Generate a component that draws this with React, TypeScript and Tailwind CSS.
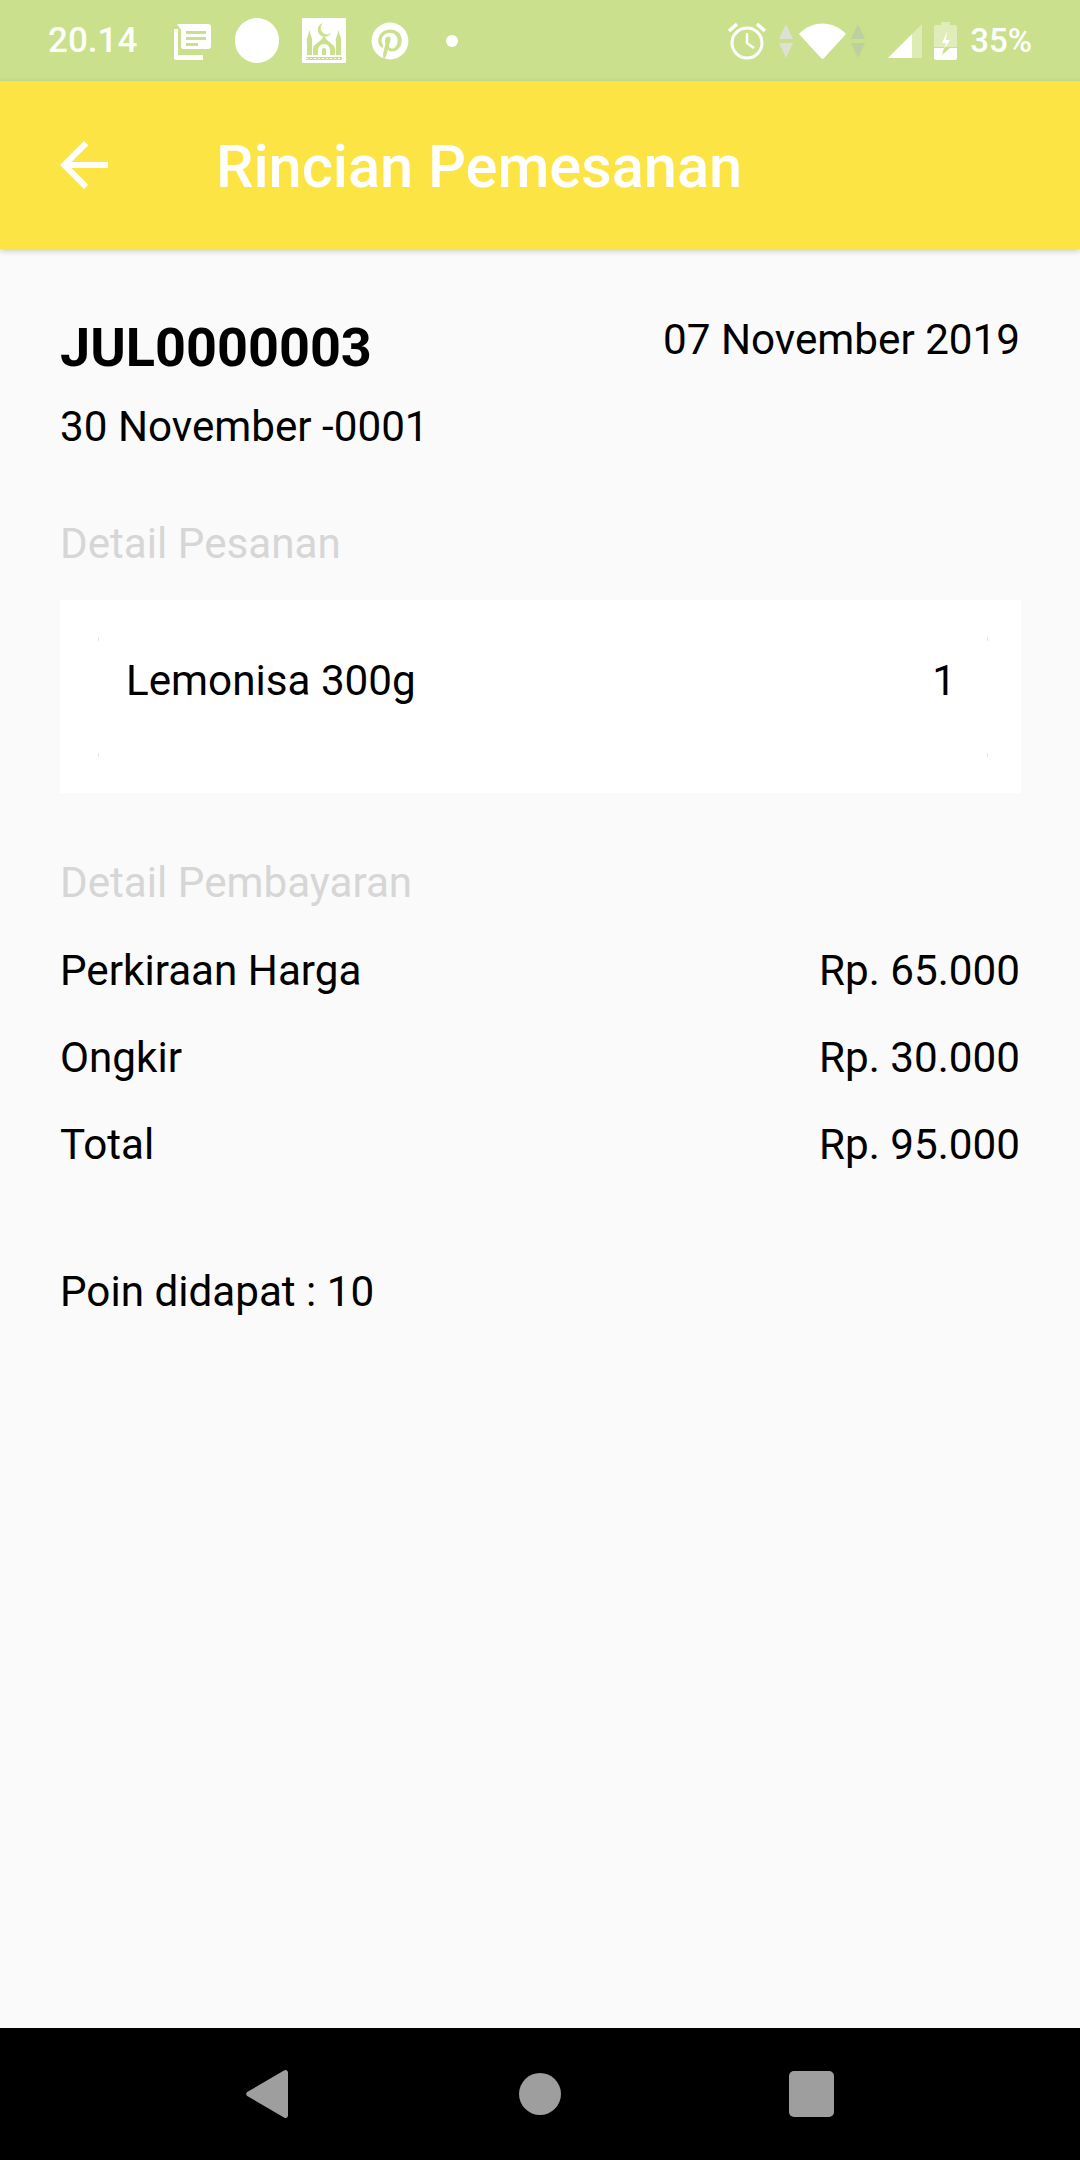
import React from 'react';
import { FaPinterest } from 'react-icons/fa';

const NewsIcon = () => (
  <svg width="38" height="38" viewBox="0 0 38 38" className="ml-[37px] shrink-0">
    <path fill="#fff" d="M3 2 H34 a3 3 0 0 1 3 3 V24 a3 3 0 0 1 -3 3 H9 a2 2 0 0 1 -2 -2 V8 Z" />
    <path fill="#fff" d="M0 7 H4 V33 H29 V38 H2 a2 2 0 0 1 -2 -2 Z" />
    <rect x="12" y="9" width="20" height="3" fill="#cbe08c" />
    <rect x="12" y="15" width="20" height="3" fill="#cbe08c" />
    <rect x="12" y="21" width="12" height="3" fill="#cbe08c" />
  </svg>
);

const MosqueIcon = () => (
  <svg width="44" height="45" viewBox="0 0 44 45" className="ml-[23px] shrink-0">
    <rect width="44" height="45" rx="1" fill="#fff" />
    <path fill="#cbe08c" d="M11 37 V31 C11 26 18 25 22 18 C26 25 33 26 33 31 V37 Z" />
    <path fill="#cbe08c" d="M5 37 V24 C4 21 6 19 7.5 12 C9 19 11 21 10 24 V37 Z M34 37 V24 C33 21 35 19 36.5 12 C38 19 40 21 39 24 V37 Z" />
    <path fill="#fff" d="M16 37 V32 a6 6 0 0 1 12 0 V37 Z" />
    <path fill="#cbe08c" d="M20 37 V32 a2 2 0 0 1 4 0 V37 Z" />
    <path fill="#cbe08c" d="M21 5 a7 7 0 1 0 8 10 a6 6 0 1 1 -8 -10 Z" />
    <rect x="4" y="39" width="36" height="3" fill="#cbe08c" />
    <path stroke="#fff" strokeWidth="1" strokeDasharray="2 2" d="M4 40.5 H40" />
  </svg>
);

const AlarmIcon = () => (
  <svg width="38" height="38" viewBox="0 0 38 38" fill="none" stroke="#fff" strokeWidth="3" className="shrink-0">
    <circle cx="19" cy="21" r="15" />
    <path d="M19 11 V21 L26 26" strokeWidth="2.5" />
    <path d="M1 9 L9 2 M37 9 L29 2" strokeWidth="3.5" />
  </svg>
);

const DataArrows = ({ className, color }: { className: string; color: string }) => (
  <svg width="14" height="34" viewBox="0 0 14 34" className={className}>
    <path fill={color} d="M7 0 L14 15 H0 Z" />
    <path fill={color} d="M0 19 H14 L7 34 Z" />
  </svg>
);

const WifiIcon = () => (
  <svg width="47" height="36" viewBox="0 0 47 36" className="ml-[6px] shrink-0">
    <path fill="#fff" d="M0 11 C13 -3 34 -3 47 11 L25 35 a2 2 0 0 1 -3 0 Z" />
  </svg>
);

const SignalIcon = () => (
  <svg width="34" height="34" viewBox="0 0 34 34" className="ml-[23px] shrink-0">
    <path fill="#fff" fillOpacity="0.35" d="M34 0 V34 H0 Z" />
    <path fill="#fff" d="M24 10 V34 H0 Z" />
  </svg>
);

const BatteryIcon = () => (
  <svg width="23" height="38" viewBox="0 0 23 38" className="ml-3 shrink-0">
    <path fill="#fff" fillOpacity="0.4" d="M7 0 H16 V3 H21 a2 2 0 0 1 2 2 V25 H0 V5 a2 2 0 0 1 2 -2 H7 Z" />
    <path fill="#fff" d="M0 26 H10 L8 33 L16 26 H23 V36 a2 2 0 0 1 -2 2 H2 a2 2 0 0 1 -2 -2 Z" />
    <path fill="#fff" d="M13 10 L8 21 H12 L10 27 L16 18 H12 Z" />
  </svg>
);

const PriceRow = ({ label, value }: { label: string; value: string }) => (
  <div className="flex h-[87px] items-center justify-between text-[42.2px] text-black">
    <span>{label}</span>
    <span>{value}</span>
  </div>
);

const App: React.FC = () => {
  return (
    <div className="flex h-[2160px] w-[1080px] flex-col overflow-hidden bg-[#fafafa] font-['Roboto',sans-serif]">
      {/* status bar */}
      <div className="flex h-[81px] shrink-0 items-center bg-[#cbe08c] pl-[48px] pr-[48px] text-white">
        <span className="text-[35px] font-medium leading-none opacity-95">20.14</span>
        <NewsIcon />
        <div className="ml-[23px] h-[45px] w-[44px] shrink-0 rounded-full bg-white" />
        <MosqueIcon />
        <FaPinterest className="ml-[25px] h-[38px] w-[38px] shrink-0" />
        <div className="ml-[37px] h-3 w-3 shrink-0 rounded-full bg-white" />
        <div className="ml-auto flex items-center">
          <AlarmIcon />
          <DataArrows className="ml-[13px] shrink-0" color="#dde0d4" />
          <WifiIcon />
          <DataArrows className="ml-[5px] shrink-0" color="#bcd0a0" />
          <SignalIcon />
          <BatteryIcon />
          <span className="ml-[13px] text-[33px] font-medium leading-none">35%</span>
        </div>
      </div>

      {/* app bar */}
      <div className="flex h-[168px] shrink-0 items-center bg-[#fde445] shadow-[0_2px_6px_rgba(0,0,0,0.2)]">
        <svg width="72" height="72" viewBox="0 0 24 24" fill="#fff" className="ml-[48px] shrink-0">
          <path d="M20 11H7.83l5.59-5.59L12 4l-8 8 8 8 1.41-1.41L7.83 13H20v-2z" />
        </svg>
        <h1 className="ml-[96px] mt-[5px] text-[59.5px] font-medium text-white">Rincian Pemesanan</h1>
      </div>

      {/* content */}
      <div className="flex flex-col px-[60px]">
        <div className="mt-[64px] flex items-start justify-between">
          <span className="text-[54px] font-bold leading-[70px] text-black">JUL0000003</span>
          <span className="mt-[2px] text-[42.2px] leading-[50px] text-black">07 November 2019</span>
        </div>
        <div className="mt-[19px] text-[42.2px] leading-[50px] text-black">30 November -0001</div>

        <div className="mt-[67px] text-[42.2px] leading-[50px] text-[#d6d6d6]">Detail Pesanan</div>

        <div className="relative mt-[31px] flex h-[193px] w-[961px] items-start justify-between bg-white pl-[66px] pr-[65px] pt-[56px] text-[42.2px] leading-[50px] text-black">
          <span className="absolute left-[38px] top-[37px] h-1 w-px bg-[#e4e4e4]" />
          <span className="absolute right-[33px] top-[37px] h-1 w-px bg-[#e4e4e4]" />
          <span className="absolute bottom-[36px] left-[38px] h-1 w-px bg-[#e4e4e4]" />
          <span className="absolute bottom-[36px] right-[33px] h-1 w-px bg-[#e4e4e4]" />
          <span>Lemonisa 300g</span>
          <span>1</span>
        </div>

        <div className="mt-[65px] text-[42.2px] leading-[50px] text-[#d6d6d6]">Detail Pembayaran</div>

        <div className="mt-[19px] flex flex-col">
          <PriceRow label="Perkiraan Harga" value="Rp. 65.000" />
          <PriceRow label="Ongkir" value="Rp. 30.000" />
          <PriceRow label="Total" value="Rp. 95.000" />
        </div>

        <div className="mt-[79px] text-[42.2px] leading-[50px] text-black">Poin didapat : 10</div>
      </div>

      {/* nav bar */}
      <div className="mt-auto flex h-[132px] shrink-0 items-center bg-black pl-[246px]">
        <svg width="42" height="48" viewBox="0 0 42 48" className="shrink-0">
          <path fill="#9e9e9e" d="M38 .6 a2.5 2.5 0 0 1 4 2 V45.4 a2.5 2.5 0 0 1 -4 2 L1.2 26 a2.5 2.5 0 0 1 0 -4 Z" />
        </svg>
        <div className="ml-[231px] h-[42px] w-[42px] shrink-0 rounded-full bg-[#9e9e9e]" />
        <div className="ml-[228px] h-[46px] w-[45px] shrink-0 rounded-[5px] bg-[#9e9e9e]" />
      </div>
    </div>
  );
};

export default App;
